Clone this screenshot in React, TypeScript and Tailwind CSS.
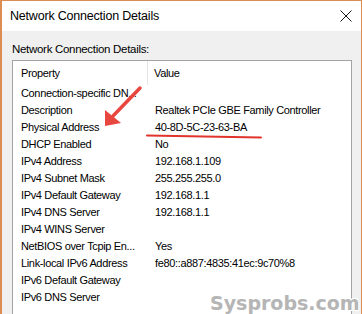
import React from 'react';

const rows: [string, string][] = [
  ['Connection-specific DN...', ''],
  ['Description', 'Realtek PCIe GBE Family Controller'],
  ['Physical Address', '40-8D-5C-23-63-BA'],
  ['DHCP Enabled', 'No'],
  ['IPv4 Address', '192.168.1.109'],
  ['IPv4 Subnet Mask', '255.255.255.0'],
  ['IPv4 Default Gateway', '192.168.1.1'],
  ['IPv4 DNS Server', '192.168.1.1'],
  ['IPv4 WINS Server', ''],
  ['NetBIOS over Tcpip En...', 'Yes'],
  ['Link-local IPv6 Address', 'fe80::a887:4835:41ec:9c70%8'],
  ['IPv6 Default Gateway', ''],
  ['IPv6 DNS Server', ''],
];

export default function App() {
  return (
    <div className="relative w-[362px] h-[314px] overflow-hidden flex flex-col bg-white border-l-2 border-t border-r border-[#dc8d52] font-['Liberation_Sans',Arial,sans-serif] text-black">
      {/* Title bar */}
      <div className="h-[30px] flex items-center justify-between pl-[8px] pr-[9px] bg-white shrink-0">
        <span className="text-[12.5px] tracking-[-0.2px]">Network Connection Details</span>
        <svg width="12" height="12" viewBox="0 0 12 12" className="text-[#1a1a1a]">
          <path d="M0.5 0.5 L11.5 11.5 M11.5 0.5 L0.5 11.5" stroke="currentColor" strokeWidth="1" />
        </svg>
      </div>

      {/* Body */}
      <div className="flex-1 bg-[#f0f0f0] pl-[10px] pr-[9px] pt-[11px]">
        <div className="text-[11.5px] tracking-[-0.3px] leading-[14px] mb-[4px]">Network Connection Details:</div>
        <div className="bg-white border border-[#a3a3a3] h-[300px] pl-[8px] text-[11px] tracking-[-0.35px]">
          <div className="flex h-[24px] items-center">
            <div className="w-[127px] h-full flex items-center border-r border-[#e5e5e5]">Property</div>
            <div className="pl-[6px]">Value</div>
          </div>
          {rows.map(([k, v]) => (
            <div key={k} className="flex h-[17px] items-center whitespace-nowrap">
              <div className="w-[134px]">{k}</div>
              <div>{v}</div>
            </div>
          ))}
        </div>
      </div>

      {/* Annotation: arrow and underline */}
      <svg className="absolute left-0 top-0 pointer-events-none" width="362" height="314" viewBox="0 0 362 314">
        <line x1="138" y1="87" x2="111" y2="115" stroke="#e8473f" strokeWidth="3.5" strokeLinecap="round" />
        <polygon points="103,125 103,109 119,122" fill="#e8473f" />
        <path d="M145 134.5 L259 136.5" stroke="#e0342c" strokeWidth="2" strokeLinecap="round" />
      </svg>

      {/* Watermark */}
      <div className="absolute left-[208px] top-[288px] text-[19px] font-bold text-[#b5b5b5] font-['DejaVu_Sans',Verdana,sans-serif] [text-shadow:1px_1px_0_#fff,-1px_-1px_0_#fff,1px_-1px_0_#fff,-1px_1px_0_#fff]">
        Sysprobs.com
      </div>
    </div>
  );
}
